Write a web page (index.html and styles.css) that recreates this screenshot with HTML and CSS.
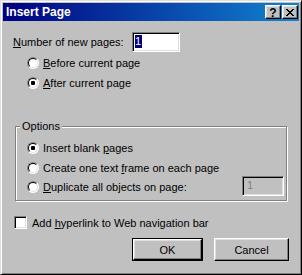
FILE: index.html
```html
<!DOCTYPE html>
<html>
<head>
<meta charset="utf-8">
<link rel="stylesheet" href="styles.css">
</head>
<body>
<div class="window">
  <div class="titlebar">
    <span class="title">Insert Page</span>
    <div class="caption-btns">
      <div class="cbtn help">?</div>
      <div class="cbtn close">
        <svg width="8" height="7" viewBox="0 0 8 7" shape-rendering="crispEdges">
          <path d="M0 0h2v1h-2z M6 0h2v1h-2z M1 1h2v1h-2z M5 1h2v1h-2z M2 2h4v1h-4z M3 3h2v1h-2z M2 4h4v1h-4z M1 5h2v1h-2z M5 5h2v1h-2z M0 6h2v1h-2z M6 6h2v1h-2z" fill="#000"/>
        </svg>
      </div>
    </div>
  </div>
  <div class="content">
    <div class="row-num">
      <span class="lbl"><u>N</u>umber of new pages:</span>
      <div class="edit"><span class="sel">1</span></div>
    </div>
    <div class="radios">
      <div class="opt"><span class="radio"></span><span><u>B</u>efore current page</span></div>
      <div class="opt"><span class="radio checked"></span><span><u>A</u>fter current page</span></div>
    </div>
    <div class="group">
      <span class="legend">Options</span>
      <div class="opt r1"><span class="radio checked"></span><span>Insert blank <u>p</u>ages</span></div>
      <div class="opt r2"><span class="radio"></span><span>Create one text <u>f</u>rame on each page</span></div>
      <div class="opt r3"><span class="radio"></span><span><u>D</u>uplicate all objects on page:</span><div class="edit disabled">1</div></div>
    </div>
    <div class="check-row"><span class="checkbox"></span><span>Add <u>h</u>yperlink to Web navigation bar</span></div>
    <div class="buttons">
      <div class="btn default"><span class="btn-inner">OK</span></div>
      <div class="btn cancel"><span class="btn-inner">Cancel</span></div>
    </div>
  </div>
</div>
</body>
</html>
```

FILE: styles.css
```css
* { box-sizing: border-box; }
html, body { margin: 0; padding: 0; background: #c0c0c0; }
body {
  font-family: "Liberation Sans", Arial, sans-serif;
  font-size: 11px;
  color: #000;
}
u { text-decoration: underline; text-underline-offset: 1px; }

.window {
  width: 302px;
  height: 275px;
  background: #c0c0c0;
  border: 1px solid;
  border-color: #dfdfdf #000 #000 #dfdfdf;
  box-shadow: inset 1px 1px #fff, inset -1px -1px #808080;
  padding: 2px;
  display: flex;
  flex-direction: column;
}

.titlebar {
  height: 18px;
  background: linear-gradient(to right, #000080, #1084d0);
  display: flex;
  align-items: center;
  justify-content: space-between;
  padding-left: 3px;
}
.title {
  color: #fff;
  font-weight: bold;
  font-size: 12px;
  line-height: 18px;
}
.caption-btns {
  display: flex;
  gap: 1px;
  padding-right: 1px;
}
.cbtn {
  width: 16px;
  height: 14px;
  background: #c0c0c0;
  border: 1px solid;
  border-color: #fff #000 #000 #fff;
  box-shadow: inset -1px -1px #808080, inset 1px 1px #dfdfdf;
  display: flex;
  align-items: center;
  justify-content: center;
}
.help {
  font-weight: bold;
  font-size: 12px;
  line-height: 12px;
  padding-top: 1px;
}
.close svg { display: block; margin-left: 0; margin-top: 0; }

.content {
  flex: 1;
  padding: 0 10px;
  display: flex;
  flex-direction: column;
}

.row-num {
  margin-top: 11px;
  height: 20px;
  display: flex;
  align-items: center;
}
.lbl { width: 119px; flex: 0 0 119px; }

.edit {
  width: 48px;
  height: 20px;
  background: #fff;
  border: 1px solid;
  border-color: #808080 #fff #fff #808080;
  box-shadow: inset 1px 1px #000, inset -1px -1px #dfdfdf;
  padding: 1px 2px 0 2px;
  display: flex;
  align-items: flex-start;
}
.sel {
  background: #000080;
  color: #fff;
  line-height: 13px;
  height: 13px;
  padding-right: 1px;
  margin-top: 1px;
}

.radios {
  margin-top: 1px;
  padding-left: 14px;
}
.opt {
  height: 20px;
  display: flex;
  align-items: center;
  gap: 4px;
}
.radio {
  position: relative;
  width: 12px;
  height: 12px;
  flex: 0 0 12px;
  border-radius: 50%;
  border: 1px solid;
  border-color: #808080 #fff #fff #808080;
  background: #fff;
}
.radio::before {
  content: "";
  position: absolute;
  inset: 0;
  border-radius: 50%;
  border: 1px solid;
  border-color: #000 #dfdfdf #dfdfdf #000;
}
.radio.checked::after {
  content: "";
  position: absolute;
  left: 3px;
  top: 3px;
  width: 4px;
  height: 4px;
  border-radius: 1px;
  background: #000;
}

.group {
  position: relative;
  margin: 33px 2px 0 2px;
  height: 75px;
  border: 1px solid #808080;
  box-shadow: inset 1px 1px #fff, 1px 1px #fff;
  padding: 11px 2px 0 11px;
}
.legend {
  position: absolute;
  left: 4px;
  top: -8px;
  padding: 0 2px;
  background: #c0c0c0;
  line-height: 14px;
}
.group .r2 { height: 19px; }
.edit.disabled {
  margin-left: auto;
  width: 42px;
  height: 20px;
  margin-top: -2px;
  background: #c0c0c0;
  color: #808080;
  padding: 2px 0 0 4px;
  line-height: 13px;
}

.check-row {
  margin-top: 11px;
  height: 21px;
  display: flex;
  align-items: center;
  gap: 5px;
  padding-left: 1px;
}
.checkbox {
  width: 13px;
  height: 13px;
  flex: 0 0 13px;
  background: #fff;
  border: 1px solid;
  border-color: #808080 #fff #fff #808080;
  box-shadow: inset 1px 1px #000, inset -1px -1px #dfdfdf;
}

.buttons {
  margin-top: 5px;
  display: flex;
  justify-content: flex-end;
  gap: 11px;
}
.btn {
  height: 23px;
  display: flex;
}
.btn.default { width: 71px; border: 1px solid #000; }
.btn.cancel { width: 75px; }
.btn-inner {
  flex: 1;
  display: flex;
  align-items: center;
  justify-content: center;
  background: #c0c0c0;
  border: 1px solid;
  border-color: #fff #000 #000 #fff;
  box-shadow: inset -1px -1px #808080, inset 1px 1px #dfdfdf;
}
.btn.default .btn-inner {
  border-color: #fff #000 #000 #fff;
}
```
